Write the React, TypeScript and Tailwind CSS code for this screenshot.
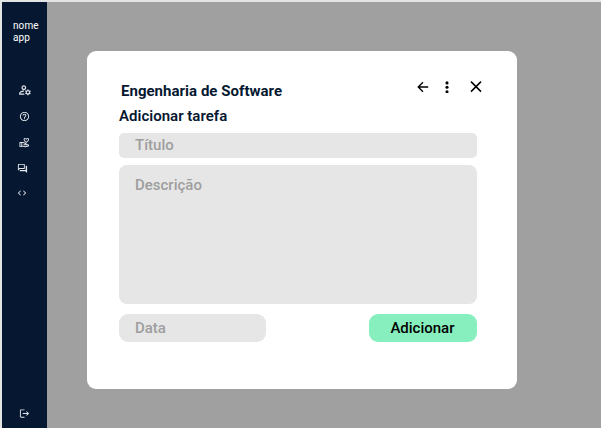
import type { ReactNode } from "react";
import {
  MdOutlineManageAccounts,
  MdHelpOutline,
  MdOutlineVolunteerActivism,
  MdOutlineQuestionAnswer,
  MdCode,
  MdLogout,
} from "react-icons/md";

function NavItem({ label, className, children }: { label: string; className: string; children: ReactNode }) {
  return (
    <button aria-label={label} className={`flex h-3 w-3 shrink-0 items-center justify-center ${className}`}>
      {children}
    </button>
  );
}

function Sidebar() {
  return (
    <nav className="flex w-[45px] shrink-0 flex-col items-start bg-[#061831] pb-[9px] pl-[11px] pt-[18px] text-[#e4e7eb]">
      <span className="h-[64px] text-[10px] leading-[12px] tracking-[0.1px] text-white">
        nome
        <br />
        app
      </span>
      <NavItem label="Contas" className="ml-[5.5px]"><MdOutlineManageAccounts size={14} className="shrink-0" /></NavItem>
      <NavItem label="Ajuda" className="ml-[5.5px] mt-[14px]"><MdHelpOutline size={11} /></NavItem>
      <NavItem label="Voluntariado" className="ml-[5px] mt-[14px]"><MdOutlineVolunteerActivism size={11} /></NavItem>
      <NavItem label="Mensagens" className="ml-[3px] mt-[14px]"><MdOutlineQuestionAnswer size={11} /></NavItem>
      <NavItem label="Código" className="ml-[3px] mt-[12.5px]"><MdCode size={10} /></NavItem>
      <NavItem label="Sair" className="ml-[5.5px] mt-auto"><MdLogout size={11} /></NavItem>
    </nav>
  );
}

function HeaderActions() {
  return (
    <div className="flex h-3 items-center text-black">
      <button aria-label="Voltar">
        <svg width="12" height="12" viewBox="0 0 12 12" fill="none" stroke="currentColor" strokeWidth="1.3">
          <path d="M11.2 6H1.4M6 1.2 1.2 6 6 10.8" />
        </svg>
      </button>
      <button aria-label="Mais opções" className="ml-[16px]">
        <svg width="4" height="12" viewBox="0 0 4 12" fill="currentColor">
          <circle cx="2" cy="1.9" r="1.55" />
          <circle cx="2" cy="6.3" r="1.55" />
          <circle cx="2" cy="10.7" r="1.55" />
        </svg>
      </button>
      <button aria-label="Fechar" className="ml-[21px]">
        <svg width="12" height="12" viewBox="0 0 12 12" fill="none" stroke="currentColor" strokeWidth="1.5">
          <path d="m1 .6 10 10M11 .6 1 10.6" />
        </svg>
      </button>
    </div>
  );
}

function TaskDialog() {
  return (
    <section className="h-[337.5px] w-[429.4px] rounded-[9px] bg-white pl-[31.7px] pr-10 pt-[30px]">
      <header className="flex items-start justify-between pl-[2px]">
        <h1 className="text-[15px] font-bold leading-5 tracking-[0.03px] text-[#061831]">Engenharia de Software</h1>
        <div className="-mr-[5.5px]">
          <HeaderActions />
        </div>
      </header>
      <h2 className="mt-[5px] text-[15px] font-semibold leading-5 tracking-[0.02px] text-[#061831]">Adicionar tarefa</h2>
      <div className="mt-[6.7px] flex h-[25.5px] items-center rounded-[5px] bg-[#e6e6e6] px-4 text-[15px] font-medium text-[#9e9e9e]">
        Título
      </div>
      <div className="mt-[7px] h-[138.4px] rounded-[8px] bg-[#e6e6e6] px-4 pt-[10px] text-[15px] font-medium leading-5 text-[#9e9e9e]">
        Descrição
      </div>
      <div className="mt-[10.4px] flex justify-between">
        <div className="flex h-7 w-[147px] items-center rounded-[9px] bg-[#e6e6e6] px-4 text-[15px] font-medium text-[#9e9e9e]">
          Data
        </div>
        <button className="h-7 w-[107.5px] rounded-[9px] bg-[#87efbd] pr-px text-[15px] font-medium text-black">
          Adicionar
        </button>
      </div>
    </section>
  );
}

export default function App() {
  return (
    <div className="flex h-[428px] w-[601px] overflow-hidden border-l-2 border-t-2 border-[#e3e4e4] bg-[#a0a0a0] font-[Roboto,sans-serif]">
      <Sidebar />
      <main className="pl-[40.3px] pt-[49px]">
        <TaskDialog />
      </main>
    </div>
  );
}
